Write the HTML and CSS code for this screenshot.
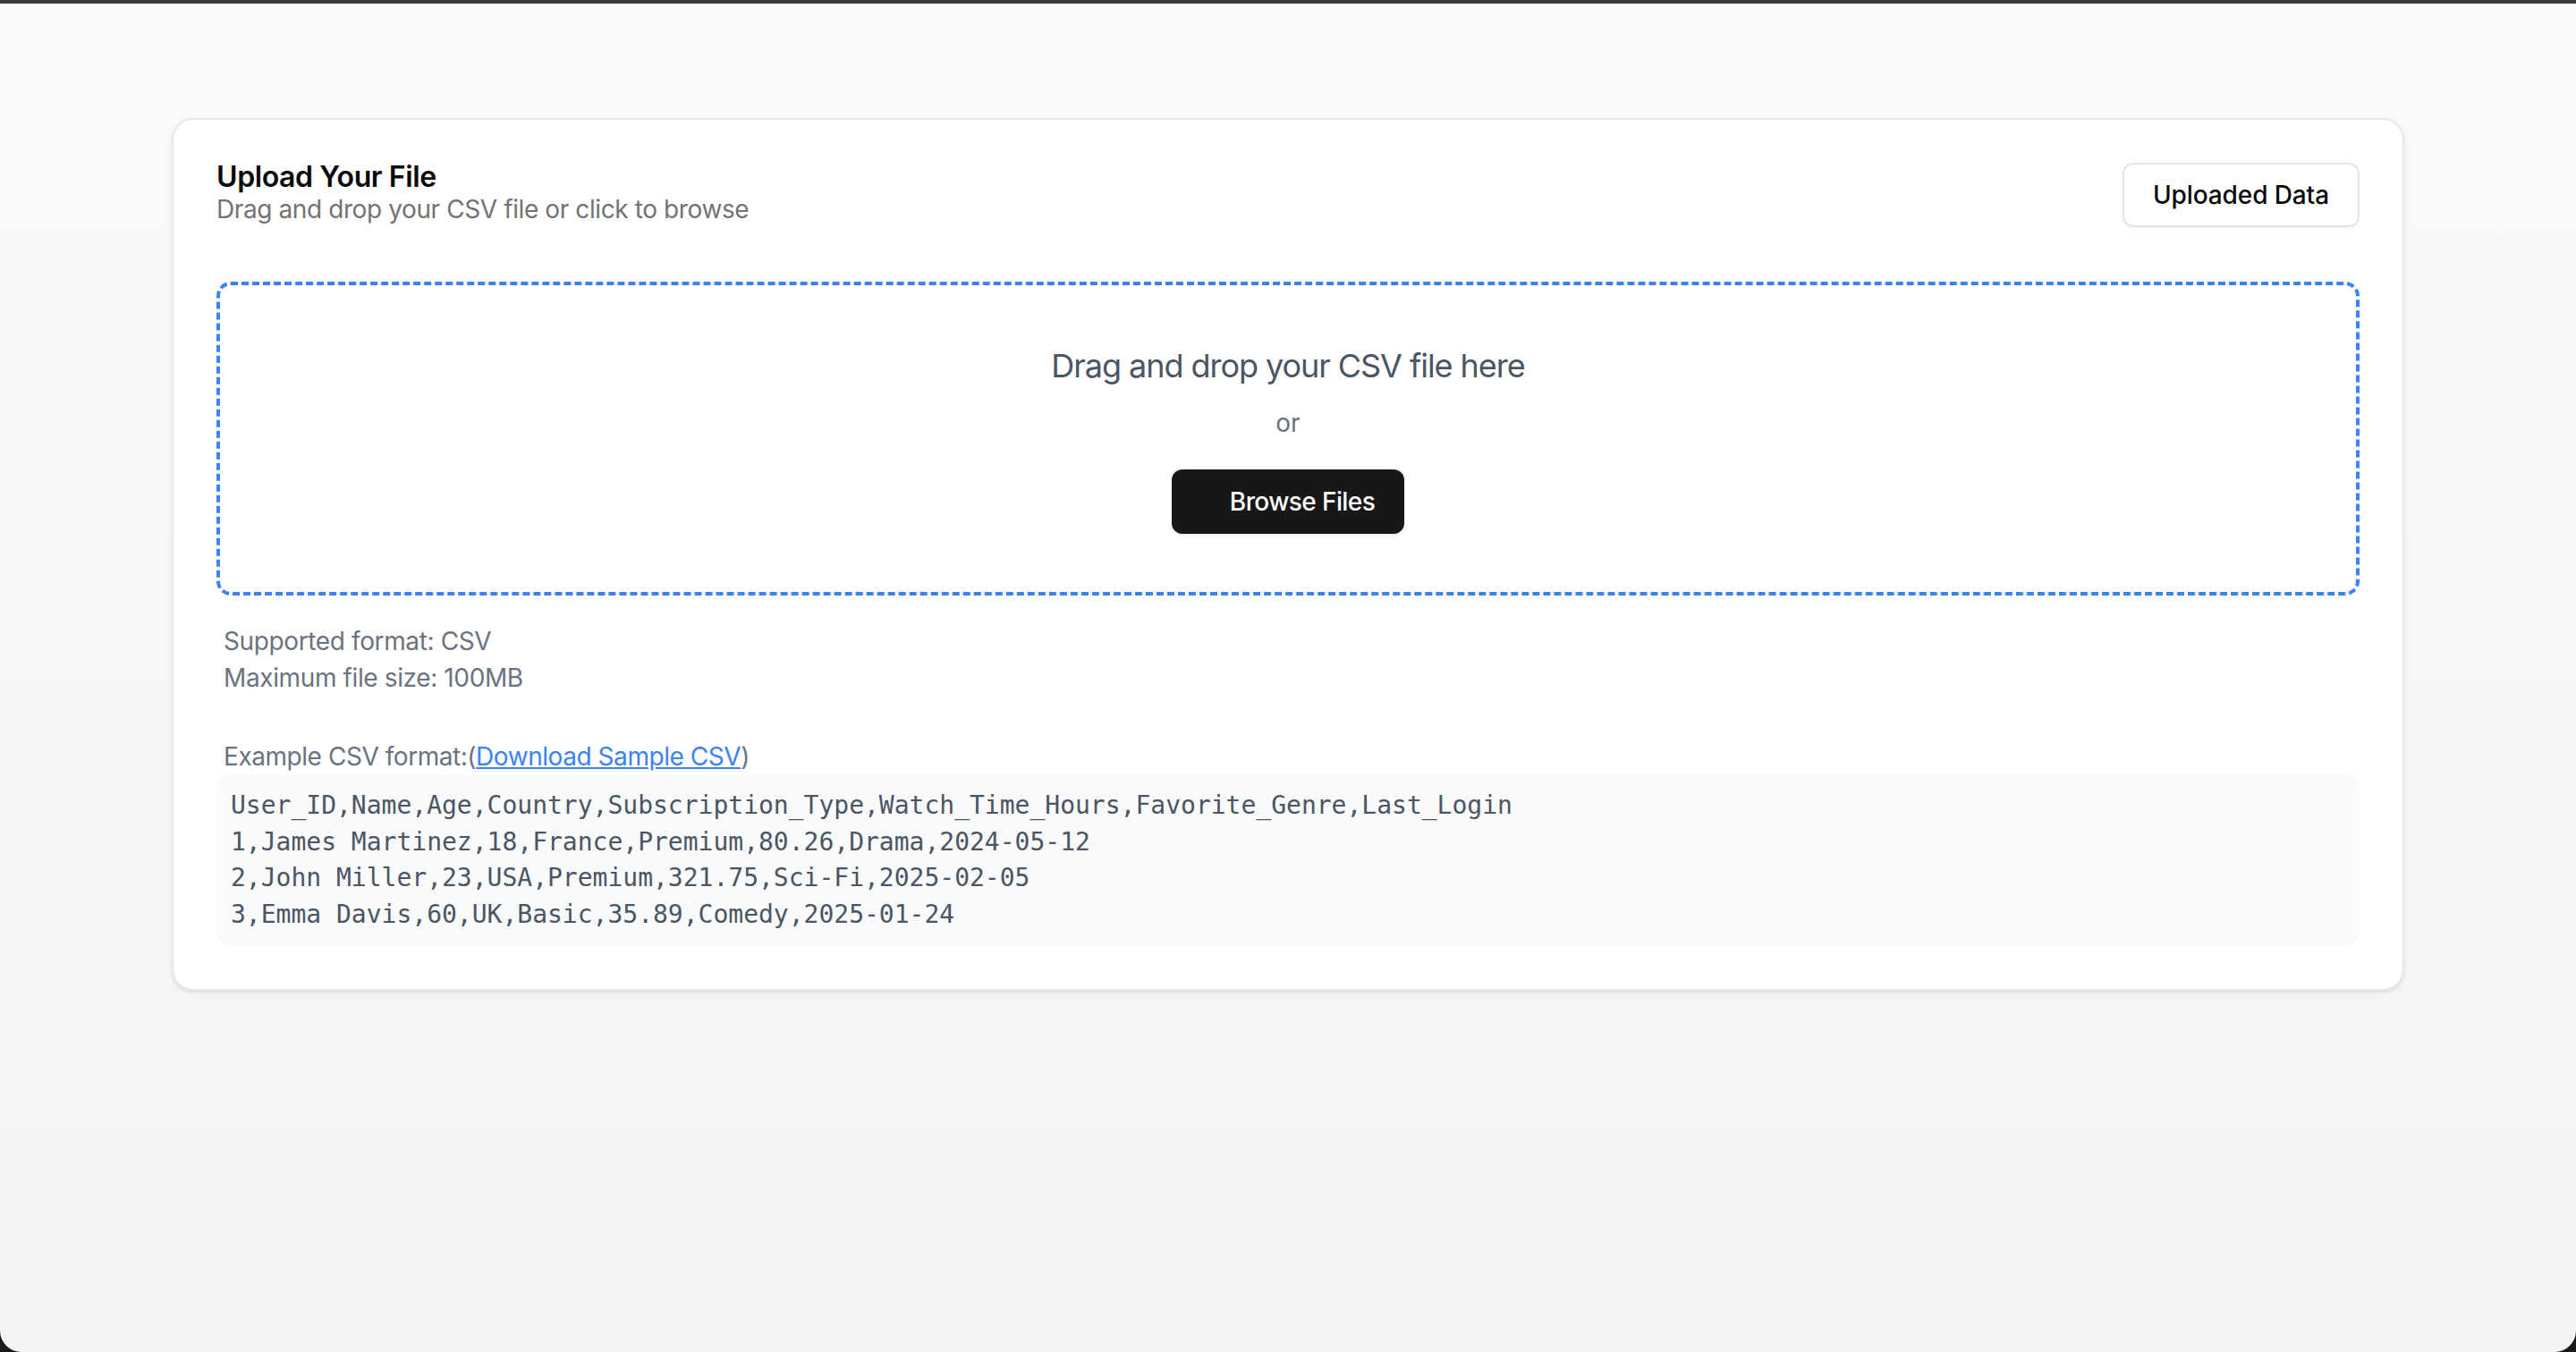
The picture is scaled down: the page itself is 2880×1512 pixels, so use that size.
FILE: index.html
```html
<!DOCTYPE html>
<html lang="en">
<head>
<meta charset="utf-8">
<title>Upload Your File</title>
<link rel="stylesheet" href="styles.css">
</head>
<body>
<div class="window">
  <main class="page">
    <section class="card">
      <header class="card-header">
        <div class="titles">
          <h2 class="card-title">Upload Your File</h2>
          <p class="card-desc">Drag and drop your CSV file or click to browse</p>
        </div>
        <button class="btn btn-outline" type="button">Uploaded Data</button>
      </header>

      <div class="dropzone">
        <p class="drop-title">Drag and drop your CSV file here</p>
        <p class="drop-or">or</p>
        <button class="btn btn-dark" type="button">Browse Files</button>
      </div>

      <div class="info">
        <p>Supported format: CSV</p>
        <p>Maximum file size: 100MB</p>
      </div>

      <div class="example">
        <p class="example-label">Example CSV format:(<a href="#" class="link">Download Sample CSV</a>)</p>
        <pre class="code">User_ID,Name,Age,Country,Subscription_Type,Watch_Time_Hours,Favorite_Genre,Last_Login
1,James Martinez,18,France,Premium,80.26,Drama,2024-05-12
2,John Miller,23,USA,Premium,321.75,Sci-Fi,2025-02-05
3,Emma Davis,60,UK,Basic,35.89,Comedy,2025-01-24</pre>
      </div>
    </section>
  </main>
</div>
</body>
</html>
```

FILE: styles.css
```css
* { box-sizing: border-box; }

html, body {
  margin: 0;
  padding: 0;
  background: #1a1a1a;
}

body {
  font-family: "Inter", "Liberation Sans", sans-serif;
  color: #0a0a0a;
}

.window {
  min-height: 1512px;
  border-top: 4px solid #3a3a3a;
  border-radius: 0 0 24px 24px;
  background: linear-gradient(to bottom, #f9fafb, #f3f4f6);
  overflow: hidden;
}

.page {
  padding: 128px 192px 0;
}

.card {
  background: #ffffff;
  border: 2px solid #e5e7eb;
  border-radius: 24px;
  padding: 48px;
  box-shadow: 0 2px 6px rgba(0, 0, 0, 0.06), 0 2px 3px rgba(0, 0, 0, 0.05);
}

.card-header {
  display: flex;
  justify-content: space-between;
  align-items: flex-start;
  margin-bottom: 61px;
}

.card-title {
  margin: 0;
  font-size: 32px;
  line-height: 32px;
  font-weight: 600;
  letter-spacing: -0.4px;
  color: #0a0a0a;
}

.card-desc {
  margin: 0;
  font-size: 28px;
  line-height: 40px;
  letter-spacing: -0.4px;
  color: #737373;
}

.btn {
  height: 72px;
  border-radius: 12px;
  font-family: inherit;
  font-size: 28px;
  font-weight: 500;
  cursor: pointer;
}

.btn-outline {
  padding: 0 32px;
  background: #ffffff;
  color: #0a0a0a;
  border: 2px solid #e5e5e5;
  letter-spacing: -0.1px;
  box-shadow: 0 2px 3px rgba(0, 0, 0, 0.04);
}

.dropzone {
  border: 4px dashed #3b82f6;
  border-radius: 16px;
  padding: 62px 0 65px;
  text-align: center;
}

.drop-title {
  margin: 0 0 16px;
  font-size: 36px;
  line-height: 56px;
  letter-spacing: -1.05px;
  color: #4b5563;
}

.drop-or {
  margin: 0 0 32px;
  font-size: 28px;
  line-height: 40px;
  color: #6b7280;
}

.btn-dark {
  padding: 0 33px 0 65px;
  background: #171717;
  color: #ffffff;
  border: none;
  letter-spacing: -0.6px;
  box-shadow: 0 2px 4px rgba(0, 0, 0, 0.08);
}

.info {
  margin-top: 31px;
  padding-left: 8px;
  color: #6b7280;
  font-size: 28px;
  line-height: 41px;
  letter-spacing: -0.38px;
}

.info p { margin: 0; }

.example {
  margin-top: 47px;
}

.example-label {
  margin: 0;
  padding-left: 8px;
  font-size: 28px;
  line-height: 40px;
  letter-spacing: -0.45px;
  color: #6b7280;
}

.link {
  color: #3b82f6;
  text-decoration: underline;
}

.code {
  margin: 0;
  padding: 15px 16px 15px;
  background: #f9fafb;
  border-radius: 16px;
  font-family: "DejaVu Sans Mono", "Liberation Mono", monospace;
  font-size: 28px;
  line-height: 40.5px;
  color: #4b5563;
}
```
